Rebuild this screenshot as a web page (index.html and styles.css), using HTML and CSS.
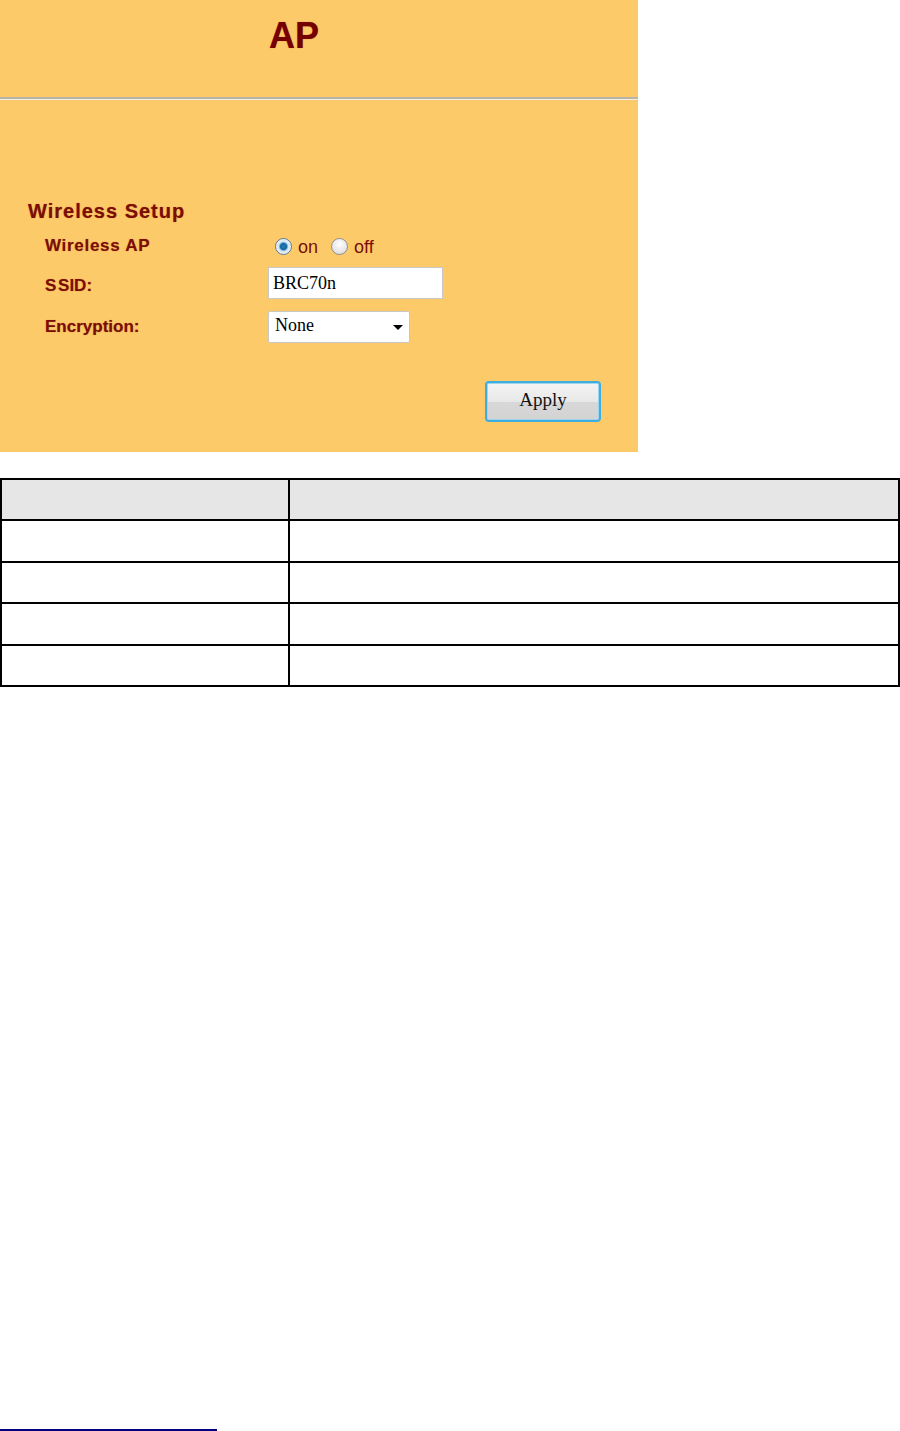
FILE: index.html
```html
<!DOCTYPE html>
<html>
  <head>
    <title>AP</title>
    <meta charset="UTF-8" />
    <link rel="stylesheet" href="styles.css">
  </head>

  <body>
    <div class="panel">
      <div class="panel-head">
        <h1 class="title">AP</h1>
      </div>
      <div class="panel-body">
        <h2 class="section">Wireless Setup</h2>
        <div class="form">
          <div class="row row-ap">
            <div class="label label-ap">Wireless AP</div>
            <div class="field">
              <label class="radio"><input type="radio" name="ap" checked> on</label>
              <label class="radio"><input type="radio" name="ap"> off</label>
            </div>
          </div>
          <div class="row row-ssid">
            <div class="label label-ssid">S SID:</div>
            <div class="field">
              <input class="text" type="text" value="BRC70n">
            </div>
          </div>
          <div class="row row-enc">
            <div class="label">Encryption:</div>
            <div class="field">
              <span class="select-wrap">
                <select class="select">
                  <option>None</option>
                  <option>WEP</option>
                  <option>WPA-PSK</option>
                </select>
              </span>
            </div>
          </div>
        </div>
        <div class="actions">
          <button class="apply">Apply</button>
        </div>
      </div>
    </div>

    <table class="grid">
      <tr class="head">
        <td class="col-a"></td>
        <td></td>
      </tr>
      <tr>
        <td class="col-a"></td>
        <td></td>
      </tr>
      <tr>
        <td class="col-a"></td>
        <td></td>
      </tr>
      <tr>
        <td class="col-a"></td>
        <td></td>
      </tr>
      <tr>
        <td class="col-a"></td>
        <td></td>
      </tr>
    </table>

    <div class="footnote-rule"></div>
  </body>
</html>
```

FILE: styles.css
```css
* {
  box-sizing: border-box;
  margin: 0;
  padding: 0;
}

body {
  background: #fff;
  width: 900px;
  height: 1431px;
  font-family: "Liberation Sans", Arial, sans-serif;
}

.panel {
  width: 638px;
  height: 452px;
  background: #fdca6a;
}

.panel-head {
  height: 99px;
  border-bottom: 2px solid #b9b4a8;
  box-shadow: 0 1px 0 #f3efe6;
}

.title {
  width: 588px;
  padding-top: 17px;
  text-align: center;
  font-size: 36px;
  line-height: 37px;
  font-weight: bold;
  color: #740000;
  text-shadow: 0 0 1px rgba(150, 40, 0, 0.6);
}

.panel-body {
  padding: 101px 37px 0 28px;
}

.section {
  font-size: 20px;
  line-height: 22px;
  font-weight: bold;
  color: #7a0e05;
  text-shadow: 0 0 1px rgba(150, 40, 0, 0.6);
  letter-spacing: 1px;
}

.form {
  padding-left: 17px;
  margin-top: 8px;
}

.row {
  display: flex;
  align-items: center;
  height: 32px;
}

.row-ssid {
  margin-top: 5px;
}

.row-enc {
  margin-top: 12px;
}

.label {
  width: 223px;
  font-size: 17px;
  font-weight: bold;
  color: #7a0e05;
  text-shadow: 0 0 1px rgba(150, 40, 0, 0.5);
}

.label-ap {
  letter-spacing: 0.7px;
}

.label-ssid {
  padding-top: 6px;
  word-spacing: -3px;
}

.field {
  display: flex;
  align-items: center;
}

.radio {
  display: flex;
  align-items: center;
  gap: 6px;
  margin-right: 6px;
  font-size: 18px;
  color: #7a0e05;
  padding-top: 2px;
  padding-left: 7px;
}

.radio input {
  appearance: none;
  width: 17px;
  height: 17px;
  border-radius: 50%;
  border: 1px solid #8e8e8e;
  background: radial-gradient(circle at 50% 35%, #ffffff, #d6d6d6);
  margin-top: -2px;
}

.radio input:checked {
  background: radial-gradient(circle, #2a7fb8 0, #1565a0 3px, #6eb0dd 4px, #d8e6f0 5px, #f2f2f2 8px);
  border-color: #5c7c98;
}

.text {
  width: 175px;
  height: 32px;
  border: 1px solid #c8c8c8;
  background: #fff;
  padding: 0 4px;
  font-family: "Liberation Serif", "Times New Roman", serif;
  font-size: 18px;
  color: #000;
  outline: none;
}

.select-wrap {
  position: relative;
  display: inline-block;
}

.select-wrap::after {
  content: "";
  position: absolute;
  right: 7px;
  top: 14px;
  border-left: 5px solid transparent;
  border-right: 5px solid transparent;
  border-top: 5px solid #000;
  pointer-events: none;
}

.select {
  appearance: none;
  width: 142px;
  height: 32px;
  border: 1px solid #c8c8c8;
  border-radius: 2px;
  background: #fff;
  padding: 0 6px 4px;
  font-family: "Liberation Serif", "Times New Roman", serif;
  font-size: 18px;
  color: #000;
  outline: none;
}

.actions {
  display: flex;
  justify-content: flex-end;
  margin-top: 38px;
}

.apply {
  width: 116px;
  height: 41px;
  border: 2px solid #3eaee0;
  border-radius: 4px;
  background: linear-gradient(#f4f4f4, #e8e8e8 50%, #d8d8d8 51%, #d3d3d3);
  box-shadow: inset 0 0 0 1px #9fd4ee;
  font-family: "Liberation Serif", "Times New Roman", serif;
  font-size: 19px;
  color: #111;
  padding-bottom: 4px;
}

.grid {
  width: 900px;
  margin-top: 26px;
  border-collapse: collapse;
}

.grid td {
  height: 41.4px;
  border: 2px solid #000;
}

.grid .col-a {
  width: 288px;
}

.grid .head td {
  background: #e6e6e6;
}

.footnote-rule {
  width: 217px;
  margin-top: 742px;
  border-top: 2px solid #00007f;
}
```
